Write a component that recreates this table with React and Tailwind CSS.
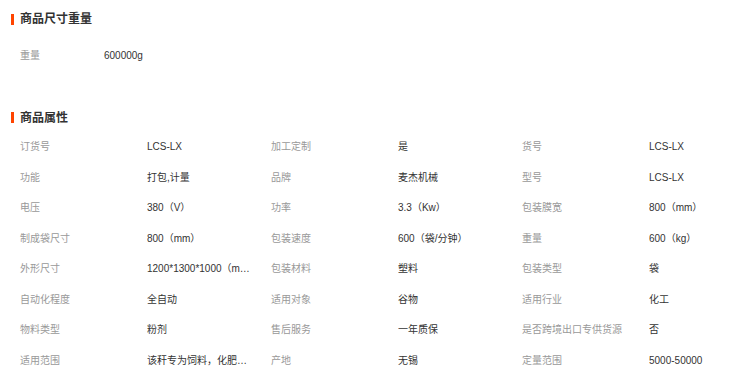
import React from 'react';

const attrs = [
  ['订货号', 'LCS-LX', '加工定制', '是', '货号', 'LCS-LX'],
  ['功能', '打包,计量', '品牌', '麦杰机械', '型号', 'LCS-LX'],
  ['电压', '380（V）', '功率', '3.3（Kw）', '包装膜宽', '800（mm）'],
  ['制成袋尺寸', '800（mm）', '包装速度', '600（袋/分钟）', '重量', '600（kg）'],
  ['外形尺寸', '1200*1300*1000（mm）', '包装材料', '塑料', '包装类型', '袋'],
  ['自动化程度', '全自动', '适用对象', '谷物', '适用行业', '化工'],
  ['物料类型', '粉剂', '售后服务', '一年质保', '是否跨境出口专供货源', '否'],
  ['适用范围', '该秆专为饲料，化肥，粮食等行业', '产地', '无锡', '定量范围', '5000-50000'],
];

const Title = ({ children }) => (
  <div className="flex items-center h-5">
    <span className="w-[3px] h-[11px] bg-[#ff4400] ml-[11px] mr-[6px]" />
    <h2 className="text-[12px] font-bold text-[#333] leading-5">{children}</h2>
  </div>
);

const Cell = ({ label, value }) => (
  <div className="flex w-[251px] shrink-0 items-center">
    <span className="w-[127px] shrink-0 text-[#999] whitespace-nowrap">{label}</span>
    <span className="w-[104px] shrink-0 text-[#333] truncate">{value}</span>
  </div>
);

export default function App() {
  return (
    <div
      className="w-[745px] h-[383px] bg-white overflow-hidden pt-[9px] text-[10px]"
      style={{ fontFamily: '"Liberation Sans", "Noto Sans CJK SC", sans-serif' }}
    >
      <Title>商品尺寸重量</Title>
      <div className="flex items-center h-[30.5px] mt-[11px] pl-5">
        <span className="w-[84px] text-[#999]">重量</span>
        <span className="text-[#333]">600000g</span>
      </div>

      <div className="mt-[37px]">
        <Title>商品属性</Title>
      </div>
      <div className="mt-[4px] pl-5">
        {attrs.map((r, i) => (
          <div key={i} className="flex h-[30.5px]">
            <Cell label={r[0]} value={r[1]} />
            <Cell label={r[2]} value={r[3]} />
            <Cell label={r[4]} value={r[5]} />
          </div>
        ))}
      </div>
    </div>
  );
}
